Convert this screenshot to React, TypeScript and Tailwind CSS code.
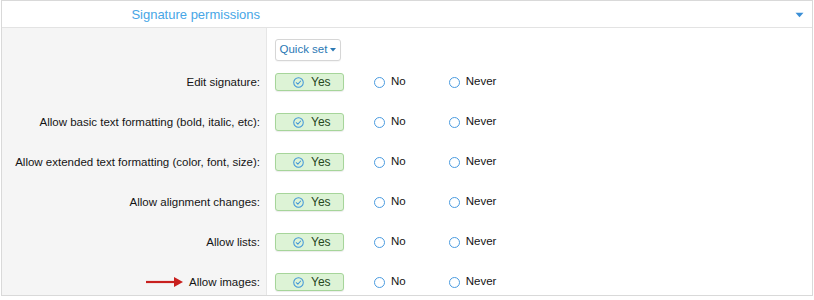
import React from "react";

const rows = [
  "Edit signature:",
  "Allow basic text formatting (bold, italic, etc):",
  "Allow extended text formatting (color, font, size):",
  "Allow alignment changes:",
  "Allow lists:",
  "Allow images:",
];

function CheckCircle() {
  return (
    <svg width="11" height="11" viewBox="0 0 12 12" fill="none">
      <circle cx="6" cy="6" r="5.2" stroke="#3f95d8" strokeWidth="1.1" />
      <path d="M3.6 6.2 L5.3 7.8 L8.4 4.4" stroke="#3f95d8" strokeWidth="1.1" fill="none" strokeLinecap="round" strokeLinejoin="round" />
    </svg>
  );
}

function Radio() {
  return <span className="inline-block w-[11px] h-[11px] rounded-full border-[1.3px] border-[#4a9be0] bg-white" />;
}

function Arrow() {
  return (
    <svg className="absolute left-[145px] top-[276px]" width="40" height="12" viewBox="0 0 40 12">
      <path d="M1 6 H32" stroke="#c8201e" strokeWidth="2.2" />
      <path d="M29 1 L38 6 L29 11 Z" fill="#c8201e" />
    </svg>
  );
}

export default function App() {
  return (
    <div className="relative w-[814px] h-[300px] bg-white" style={{ fontFamily: '"Liberation Sans", Arial, sans-serif' }}>
      <div className="ml-px w-[812px] border border-[#d9d9d9]">
        <div className="flex items-center h-[27px] pt-px border-b border-[#e3e3e3] bg-white">
          <div className="w-[265px] pr-[7px] text-right text-[13px] text-[#47a6e6] leading-none">Signature permissions</div>
          <div className="flex-1" />
          <svg className="mr-[8px]" width="9" height="6" viewBox="0 0 9 6">
            <path d="M0.5 0.8 H8.5 L4.5 5.2 Z" fill="#3b8fd6" />
          </svg>
        </div>
        <div className="flex">
          <div className="w-[265px] bg-[#f5f5f5] border-r border-[#e6e6e6]" />
          <div className="pl-[8px] pt-[11px]">
            <button className="h-[22px] w-[66px] rounded-[3px] border border-[#d6d6d6] bg-white text-[11.5px] text-[#2a78b4] flex items-center justify-center gap-[3px] shadow-[0_1px_1px_rgba(0,0,0,0.04)]">
              Quick set
              <svg width="6" height="4" viewBox="0 0 6 4"><path d="M0 0 H6 L3 3.6 Z" fill="#2a78b4" /></svg>
            </button>
          </div>
        </div>
        {rows.map((label, i) => (
          <div key={i} className="flex">
            <div className={`w-[265px] bg-[#f5f5f5] border-r border-[#e6e6e6] pr-[6px] text-right text-[11.5px] text-[#141414] pt-[12px] ${i === rows.length - 1 ? "pb-[4px]" : "pb-[10px]"}`}>
              <div className="h-[18px] leading-[18px] whitespace-nowrap">{label}</div>
            </div>
            <div className={`flex items-start pl-[8px] pt-[12px] ${i === rows.length - 1 ? "pb-[4px]" : "pb-[10px]"}`}>
              <div className="h-[18px] w-[69px] rounded-[3px] border border-[#a6d59a] bg-[#ddf3d6] flex items-center pl-[17px] gap-[7px] shadow-[0_1px_1px_rgba(0,0,0,0.08)]">
                <CheckCircle />
                <span className="text-[12px] text-[#26461d] leading-none">Yes</span>
              </div>
              <div className="flex items-center h-[18px] ml-[30px] gap-[6px]">
                <Radio />
                <span className="text-[11.5px] text-[#141414] leading-none">No</span>
              </div>
              <div className="flex items-center h-[18px] ml-[43px] gap-[6px]">
                <Radio />
                <span className="text-[11.5px] text-[#141414] leading-none">Never</span>
              </div>
            </div>
          </div>
        ))}
      </div>
      <Arrow />
    </div>
  );
}
